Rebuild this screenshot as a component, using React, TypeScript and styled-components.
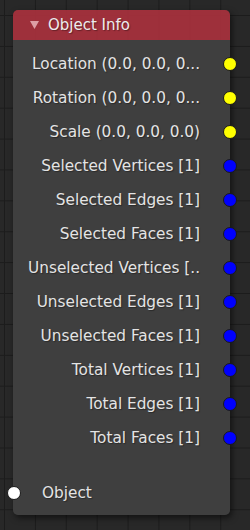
import React from "react";
import styled, { createGlobalStyle } from "styled-components";

const GlobalStyle = createGlobalStyle`
  html, body {
    margin: 0;
    padding: 0;
    width: 250px;
    height: 530px;
    overflow: hidden;
  }
  body {
    font-family: "DejaVu Sans", "Liberation Sans", sans-serif;
  }
`;

const Canvas = styled.div`
  width: 250px;
  height: 530px;
  box-sizing: border-box;
  padding: 10px 0 0 13px;
  background-color: #282828;
  background-image:
    linear-gradient(to right, #1c1c1c 1px, transparent 1px),
    linear-gradient(to bottom, #1c1c1c 1px, transparent 1px);
  background-size: 30.9px 30.9px;
  background-position: 4px 15px;
`;

const Node = styled.div`
  width: 217px;
  border-radius: 5px;
  box-shadow: 2px 3px 6px rgba(0, 0, 0, 0.55);
  color: #e4e4e4;
  font-size: 15.3px;
  text-shadow: 1px 1px 1px rgba(0, 0, 0, 0.35);
`;

const Header = styled.div`
  height: 30px;
  display: flex;
  align-items: center;
  gap: 9px;
  padding-left: 17px;
  background: rgba(164, 48, 60, 0.95);
  border-radius: 5px 5px 0 0;
  font-size: 15px;
  color: #ececec;
`;

const Body = styled.div`
  padding: 7px 0 5px;
  background: rgba(66, 66, 66, 0.93);
  border-radius: 0 0 5px 5px;
`;

const OutRow = styled.div`
  height: 34px;
  display: flex;
  align-items: center;
  justify-content: flex-end;
  gap: 23px;
  margin-right: -7px;
`;

const InRow = styled.div<{ $gap: number }>`
  height: 34px;
  display: flex;
  align-items: center;
  gap: 21px;
  margin-left: -6px;
  margin-top: ${(p) => p.$gap}px;
`;

const Socket = styled.span<{ $color: string }>`
  width: 12px;
  height: 12px;
  border-radius: 50%;
  flex: none;
  background: ${(p) => p.$color};
  border: 1px solid #1a1a1a;
`;

const outputs: [string, string][] = [
  ["Location (0.0, 0.0, 0...", "#ffff00"],
  ["Rotation (0.0, 0.0, 0...", "#ffff00"],
  ["Scale (0.0, 0.0, 0.0)", "#ffff00"],
  ["Selected Vertices [1]", "#0000ff"],
  ["Selected Edges [1]", "#0000ff"],
  ["Selected Faces [1]", "#0000ff"],
  ["Unselected Vertices [..", "#0000ff"],
  ["Unselected Edges [1]", "#0000ff"],
  ["Unselected Faces [1]", "#0000ff"],
  ["Total Vertices [1]", "#0000ff"],
  ["Total Edges [1]", "#0000ff"],
  ["Total Faces [1]", "#0000ff"],
];

export default function App() {
  return (
    <>
      <GlobalStyle />
      <Canvas>
        <Node>
          <Header>
            <svg width="9" height="8" viewBox="0 0 9 8">
              <polygon points="0,0 9,0 4.5,8" fill="rgba(255,220,222,0.65)" />
            </svg>
            Object Info
          </Header>
          <Body>
            {outputs.map(([label, color]) => (
              <OutRow key={label}>
                <span>{label}</span>
                <Socket $color={color} />
              </OutRow>
            ))}
            <InRow $gap={21}>
              <Socket $color="#ffffff" />
              <span>Object</span>
            </InRow>
          </Body>
        </Node>
      </Canvas>
    </>
  );
}
